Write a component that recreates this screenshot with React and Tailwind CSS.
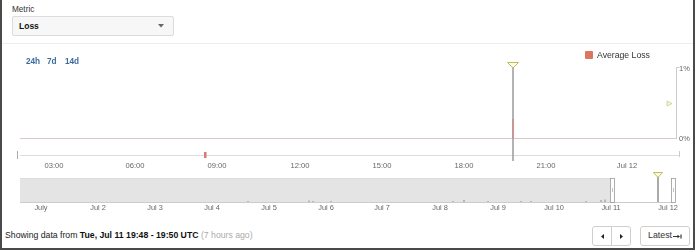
import React from "react";

const hourTicks = [
  { x: 54, label: "03:00" },
  { x: 135, label: "06:00" },
  { x: 217, label: "09:00" },
  { x: 300, label: "12:00" },
  { x: 382, label: "15:00" },
  { x: 464, label: "18:00" },
  { x: 546, label: "21:00" },
  { x: 627, label: "Jul 12" },
];

const dayTicks = [
  { x: 41, label: "July" },
  { x: 98, label: "Jul 2" },
  { x: 155, label: "Jul 3" },
  { x: 212, label: "Jul 4" },
  { x: 269, label: "Jul 5" },
  { x: 326, label: "Jul 6" },
  { x: 382, label: "Jul 7" },
  { x: 440, label: "Jul 8" },
  { x: 498, label: "Jul 9" },
  { x: 554, label: "Jul 10" },
  { x: 611, label: "Jul 11" },
  { x: 668, label: "Jul 12" },
];

// little blips of data in the navigator series
const blips = [
  [247, 1], [308, 1.5], [312, 1], [330, 1], [452, 1], [463, 2], [487, 1],
  [520, 1], [530, 1], [585, 1], [600, 2], [604, 2.5],
];

function Chart() {
  return (
    <svg
      width="691"
      height="170"
      viewBox="2 45 691 170"
      className="block will-change-transform"
      style={{ fontFamily: '"Liberation Sans", Arial, sans-serif' }}
    >
      {/* range buttons */}
      <g fontSize="8.2" fontWeight="700" fill="#3b6a9c">
        <text x="26" y="65">24h</text>
        <text x="47" y="65">7d</text>
        <text x="65" y="65">14d</text>
      </g>

      {/* legend */}
      <rect x="585" y="52" width="8" height="8" rx="1" fill="#dc7660" />
      <text x="597" y="59" fontSize="8.7" fill="#333">
        Average Loss
      </text>

      {/* y axis */}
      <line x1="676.5" y1="68" x2="676.5" y2="139" stroke="#ccc" />
      <line x1="676" y1="68.5" x2="679" y2="68.5" stroke="#ccc" />
      <text x="679" y="72" fontSize="7.5" fill="#666">1%</text>
      <text x="679" y="142" fontSize="7.5" fill="#666">0%</text>
      <polygon
        points="667,102 672,104.5 667,107"
        fill="#f1f6dc"
        stroke="#c3d483"
        strokeWidth="0.8"
      />

      {/* baseline */}
      <line x1="20" y1="139.5" x2="677" y2="139.5" stroke="#dbc9c9" strokeWidth="1.2" />

      {/* x axis */}
      <line x1="20" y1="156.5" x2="679" y2="156.5" stroke="#ddd" />
      <line x1="17.5" y1="152" x2="17.5" y2="160" stroke="#aaa" />
      <line x1="679.5" y1="152" x2="679.5" y2="158" stroke="#ccc" />
      <g fontSize="7.6" fill="#666" textAnchor="middle">
        {hourTicks.map((t) => (
          <text key={t.label} x={t.x} y="169">
            {t.label}
          </text>
        ))}
      </g>

      {/* loss marker */}
      <rect x="204" y="153" width="2.5" height="6" fill="#e27474" />

      {/* event line */}
      <line x1="513" y1="67" x2="513" y2="162" stroke="#9a9a9a" strokeWidth="1.5" />
      <line x1="513" y1="120" x2="513" y2="139" stroke="#cf8a8a" strokeWidth="1.5" />
      <polygon
        points="507.5,63.5 518.5,63.5 513,69"
        fill="#fffbe2"
        stroke="#b7b84c"
        strokeWidth="0.9"
      />

      {/* navigator */}
      <rect x="20" y="179" width="590" height="24" fill="#e4e4e4" />
      <line x1="20" y1="179.5" x2="610" y2="179.5" stroke="#dcdcdc" />
      {blips.map(([x, h], i) => (
        <rect key={i} x={x} y={203 - h} width="2" height={h} fill="#b8b8b8" />
      ))}
      <line x1="20" y1="203.5" x2="672" y2="203.5" stroke="#ccc" />
      <line x1="658" y1="177" x2="658" y2="203" stroke="#8e8e8e" strokeWidth="1.5" />
      <polygon
        points="653.5,173.5 662.5,173.5 658,178.5"
        fill="#fffbe2"
        stroke="#b7b84c"
        strokeWidth="0.9"
      />
      <rect x="610.5" y="179.5" width="4" height="24" fill="#fff" stroke="#999" strokeWidth="0.8" />
      <line x1="612.5" y1="189" x2="612.5" y2="193" stroke="#999" strokeWidth="0.6" />
      <rect x="671.5" y="179.5" width="4" height="24" fill="#fff" stroke="#999" strokeWidth="0.8" />
      <line x1="673.5" y1="189" x2="673.5" y2="193" stroke="#999" strokeWidth="0.6" />
      <g fontSize="7.4" fill="#666" textAnchor="middle">
        {dayTicks.map((t) => (
          <text key={t.label} x={t.x} y="211">
            {t.label}
          </text>
        ))}
      </g>
    </svg>
  );
}

export default function App() {
  return (
    <div
      className="w-[695px] h-[250px] bg-white border-x-2 border-b-2 border-[#4a4a4a] flex flex-col overflow-hidden text-[#222]"
      style={{ fontFamily: '"Liberation Sans", Arial, sans-serif' }}
    >
      <div className="h-[44px] border-b border-[#eeeeee] pl-[10px] pt-[5px]">
        <div className="text-[8.2px] leading-[10px] text-[#333]">Metric</div>
        <div className="mt-[1px] w-[162px] h-[20px] flex items-center justify-between px-[6px] bg-[#f7f7f7] border border-[#dcdcdc] rounded-[2px]">
          <span className="text-[8.5px] font-bold text-[#111]">Loss</span>
          <svg width="6" height="4" viewBox="0 0 6 4" className="mr-[3px]">
            <polygon points="0,0 6,0 3,3.5" fill="#666" />
          </svg>
        </div>
      </div>

      <Chart />

      <div className="flex-1 flex items-center justify-between pl-[3px] pr-[3px] pt-[10px]">
        <div className="text-[8.7px] whitespace-nowrap">
          Showing data from{" "}
          <span className="font-bold text-[#111]">Tue, Jul 11 19:48 - 19:50 UTC</span>{" "}
          <span className="text-[#aaa]">(7 hours ago)</span>
        </div>
        <div className="flex items-center gap-[9px]">
          <div className="flex h-[20px] border border-[#cfcfcf] rounded-[3px] bg-white">
            <button className="w-[19px] flex items-center justify-center border-r border-[#cfcfcf]">
              <svg width="3" height="5" viewBox="0 0 3 5">
                <polygon points="3,0 3,5 0,2.5" fill="#222" />
              </svg>
            </button>
            <button className="w-[18px] flex items-center justify-center">
              <svg width="3" height="5" viewBox="0 0 3 5">
                <polygon points="0,0 0,5 3,2.5" fill="#222" />
              </svg>
            </button>
          </div>
          <button className="h-[20px] w-[50px] flex items-center justify-center gap-[1px] border border-[#cfcfcf] rounded-[3px] bg-white text-[8.8px] text-[#333]">
            Latest
            <svg width="9" height="5" viewBox="0 0 9 5">
              <line x1="0" y1="2.5" x2="6" y2="2.5" stroke="#333" strokeWidth="1" />
              <polygon points="4.5,0.8 7,2.5 4.5,4.2" fill="#333" />
              <line x1="8" y1="0.5" x2="8" y2="4.5" stroke="#333" strokeWidth="1.2" />
            </svg>
          </button>
        </div>
      </div>
    </div>
  );
}
